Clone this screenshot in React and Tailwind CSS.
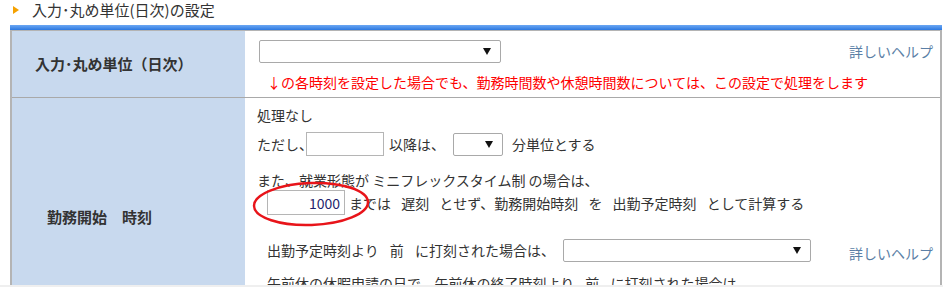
import React from 'react';

function Select({ className }) {
  return (
    <div className={`flex h-[23px] shrink-0 items-center justify-end rounded-[2px] border border-[#a9a9a9] bg-white pr-[9px] ${className}`}>
      <svg width="8" height="7" viewBox="0 0 8 7">
        <path d="M0 0H8L4 7Z" fill="#111" />
      </svg>
    </div>
  );
}

function HelpLink() {
  return <span className="whitespace-nowrap text-[14px] text-[#5b7fa6]">詳しいヘルプ</span>;
}

export default function App() {
  return (
    <div className="relative h-[287px] w-[943px] overflow-hidden bg-white font-['Meiryo','Noto_Sans_CJK_JP',sans-serif] text-[14px] text-[#333]">
      {/* section title */}
      <div className="flex h-[19px] items-center pl-[13px]">
        <span className="h-0 w-0 border-y-[4px] border-l-[6px] border-y-transparent border-l-[#f5a100]" />
        <span className="ml-[13px] text-[15px] leading-[19px]">入力･丸め単位(日次)の設定</span>
      </div>

      <div className="ml-[10px] mt-[6px] w-[932px]">
        <div className="h-[5px] bg-linear-to-b from-[#6ba7f3] to-[#2b78e0]" />
        <div className="border-x-2 border-t border-[#b4b4b4]">
          {/* row 1 */}
          <div className="flex h-[67px] border-b border-[#a9a9a9]">
            <div className="flex w-[233px] items-center bg-[#c8d9ee] pl-[23px] text-[15px] font-bold">
              入力･丸め単位（日次）
            </div>
            <div className="flex-1 pl-[14px] pr-[7px] pt-[9px]">
              <div className="flex items-center justify-between">
                <Select className="w-[242px]" />
                <HelpLink />
              </div>
              <div className="mt-[9px] whitespace-nowrap pl-[8px] leading-[20px] text-[#f00]">
                ↓の各時刻を設定した場合でも、勤務時間数や休憩時間数については、この設定で処理をします
              </div>
            </div>
          </div>

          {/* row 2 */}
          <div className="flex h-[240px]">
            <div className="w-[233px] bg-[#c8d9ee] pl-[35px] pt-[109px] text-[15px] font-bold leading-[20px]">
              勤務開始　時刻
            </div>
            <div className="relative flex-1 whitespace-nowrap pl-[12px] pr-[7px] pt-[7px] leading-[20px]">
              <div className="h-[20px]">処理なし</div>

              <div className="mt-[7px] flex h-[24px] items-center">
                <span className="w-[49px] shrink-0">ただし、</span>
                <div className="h-[24px] w-[78px] shrink-0 border border-[#b5b5b5] bg-white" />
                <span className="ml-[5px] w-[64px] shrink-0">以降は、</span>
                <Select className="w-[50px]" />
                <span className="ml-[9px]">分単位とする</span>
              </div>

              <div className="mt-[14px] h-[20px]">また、就業形態が ミニフレックスタイム制 の場合は、</div>

              <div className="flex h-[25px] items-center pl-[10px]">
                <div className="flex h-[25px] w-[78px] shrink-0 items-center justify-end border border-[#b5b5b5] bg-white pr-[4px] text-[#1f1f6e]">
                  1000
                </div>
                <span className="ml-[4px] [word-spacing:7px]">までは 遅刻 とせず、勤務開始時刻 を 出勤予定時刻 として計算する</span>
              </div>

              <div className="mt-[22px] flex items-center justify-between pl-[10px]">
                <div className="flex items-center">
                  <span className="w-[296px] shrink-0 [word-spacing:8px]">出勤予定時刻より 前 に打刻された場合は、</span>
                  <Select className="w-[248px]" />
                </div>
                <div className="pt-[6px]">
                  <HelpLink />
                </div>
              </div>

              <div className="mt-[10px] pl-[10px] [word-spacing:8px]">午前休の休暇申請の日で、午前休の終了時刻より 前 に打刻された場合は、</div>

              {/* red annotation ring */}
              <svg className="pointer-events-none absolute left-[6px] top-[83px]" width="122" height="48" viewBox="0 0 122 48">
                <ellipse cx="60" cy="23" rx="57" ry="21" fill="none" stroke="#e8141a" strokeWidth="2.5" transform="rotate(-2 60 23)" />
              </svg>
            </div>
          </div>
        </div>
      </div>

      <div className="absolute bottom-0 left-0 h-[2px] w-full bg-[#efefef]" />
    </div>
  );
}
